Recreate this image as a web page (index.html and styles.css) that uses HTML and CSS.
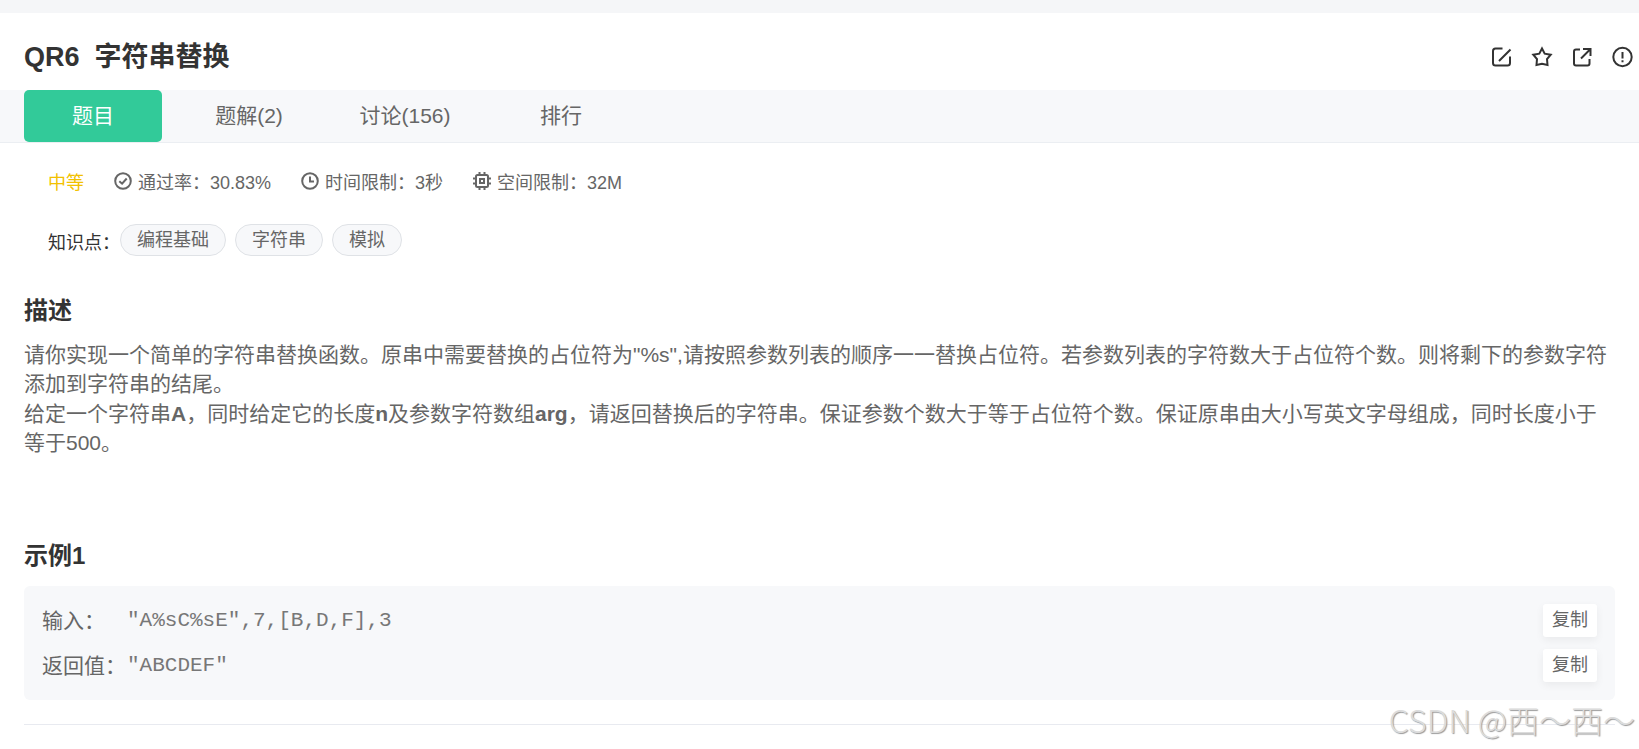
FILE: index.html
```html
<!DOCTYPE html>
<html lang="zh-CN">
<head>
    <meta charset="UTF-8">
    <meta name="viewport" content="width=device-width, initial-scale=1.0">
    <title>QR6 字符串替换</title>
    <link rel="stylesheet" href="styles.css">
</head>
<body>
    <main class="page">
        <header class="question-header">
            <h1><span>QR6</span><span>字符串替换</span></h1>
            <div class="actions">
                <button type="button" aria-label="编辑">
                    <svg viewBox="0 0 24 24"><path d="M12.500 3.500H5.500Q3 3.500 3 6V18Q3 20.500 5.500 20.500H17.500Q20 20.500 20 18V11.500M9 16L20.500 4.500"/></svg>
                </button>
                <button type="button" aria-label="收藏">
                    <svg viewBox="0 0 24 24"><path d="M12 3.500L14.700 8.700L20.700 9.700L17 14L17.500 20L12 18.700L6.500 20L7 14L3.300 9.700L9.300 8.700Z"/></svg>
                </button>
                <button type="button" aria-label="分享">
                    <svg viewBox="0 0 24 24"><path d="M10 4.500H6Q4 4.500 4 6.500V18.500Q4 20.500 6 20.500H17.500Q19.500 20.500 19.500 18.500V14M13 4H20.500V11M20.500 4L11 13.500"/></svg>
                </button>
                <button type="button" aria-label="反馈">
                    <svg viewBox="0 0 24 24"><circle cx="12.500" cy="12" r="9.200"/><path d="M12.500 7V13.500M12.500 15.200V17.200"/></svg>
                </button>
            </div>
        </header>
        <nav class="tabs">
            <a class="active" href="#question">题目</a>
            <a href="#solutions">题解(2)</a>
            <a href="#discuss">讨论(156)</a>
            <a href="#rank">排行</a>
        </nav>
        <div class="info">
            <div class="meta">
                <span class="level">中等</span>
                <span class="meta-item">
                    <svg viewBox="0 0 18 18"><circle cx="9" cy="9" r="7.800"/><path d="M5.300 9.200L8.100 11.700L12.700 6.500"/></svg>
                    通过率：30.83%
                </span>
                <span class="meta-item">
                    <svg viewBox="0 0 18 18"><circle cx="9" cy="9" r="7.800"/><path d="M9 4.500V9.500H13"/></svg>
                    时间限制：3秒
                </span>
                <span class="meta-item">
                    <svg viewBox="0 0 18 18"><rect x="3" y="3" width="12" height="12" rx="1.500"/><rect x="7" y="7" width="4" height="4"/><path d="M6.500 0V3M11.500 0V3M6.500 15V18M11.500 15V18M0 6.500H3M0 11.500H3M15 6.500H18M15 11.500H18"/></svg>
                    空间限制：32M
                </span>
            </div>
            <div class="knowledge">
                <span class="knowledge-label">知识点：</span>
                <div class="tags">
                    <a href="#basic">编程基础</a>
                    <a href="#string">字符串</a>
                    <a href="#simulate">模拟</a>
                </div>
            </div>
        </div>
        <section class="section description" id="question">
            <h2>描述</h2>
            <p>请你实现一个简单的字符串替换函数。原串中需要替换的占位符为"%s",请按照参数列表的顺序一一替换占位符。若参数列表的字符数大于占位符个数。则将剩下的参数字符添加到字符串的结尾。</p>
            <p>给定一个字符串<b>A</b>，同时给定它的长度<b>n</b>及参数字符数组<b>arg</b>，请返回替换后的字符串。保证参数个数大于等于占位符个数。保证原串由大小写英文字母组成，同时长度小于等于500。</p>
        </section>
        <section class="section example">
            <h2>示例1</h2>
            <div class="sample">
                <div class="sample-row">
                    <span class="sample-label">输入：</span>
                    <code>"A%sC%sE",7,[B,D,F],3</code>
                    <button type="button">复制</button>
                </div>
                <div class="sample-row">
                    <span class="sample-label">返回值：</span>
                    <code>"ABCDEF"</code>
                    <button type="button">复制</button>
                </div>
            </div>
        </section>
        <div class="watermark">CSDN @西～西～</div>
    </main>
</body>
</html>
```

FILE: styles.css
```css
* {
    box-sizing: border-box;
}
body {
    font-family: "Liberation Sans", "Noto Sans CJK SC", sans-serif;
    font-size: 18px;
    margin: 0;
    color: #666;
    background-color: #fff;
}
h1, h2, p {
    margin: 0;
}
a {
    color: inherit;
    text-decoration: none;
}
button {
    font-family: inherit;
    color: inherit;
    border: 0;
    cursor: pointer;
}
svg {
    display: block;
    fill: none;
    stroke: currentColor;
}
.page {
    position: relative;
    padding-bottom: 25px;
    border-top: 13px solid #f5f6f8;
}
.question-header {
    display: flex;
    align-items: center;
    justify-content: space-between;
    height: 77px;
    padding: 10px 5px 0 24px;
    color: #333;
}
.question-header h1 {
    display: flex;
    gap: 15px;
    font-size: 27px;
    line-height: 36px;
}
.actions {
    display: flex;
    gap: 16px;
}
.actions button {
    padding: 0;
    background: none;
}
.actions svg {
    width: 24px;
    height: 24px;
    stroke-width: 2;
}
.tabs {
    display: flex;
    gap: 18px;
    padding: 0 24px;
    background-color: #f7f8fa;
    border-bottom: 1px solid #ebeef2;
}
.tabs a {
    width: 138px;
    font-size: 21px;
    line-height: 52px;
    text-align: center;
    border-radius: 5px;
}
.tabs .active {
    color: #fff;
    background-color: #32ca99;
}
.info {
    padding: 24px 48px 0;
}
.meta {
    display: flex;
    flex-wrap: wrap;
    gap: 30px;
    line-height: 32px;
}
.level {
    color: #f2c100;
}
.meta-item {
    display: flex;
    align-items: center;
    gap: 6px;
}
.meta-item svg {
    width: 18px;
    height: 18px;
    margin-bottom: 4px;
    stroke-width: 2;
}
.knowledge {
    display: flex;
    margin-top: 25px;
}
.knowledge-label {
    color: #333;
    line-height: 39px;
}
.tags {
    display: flex;
    align-items: flex-start;
    gap: 9px;
}
.tags a {
    padding: 0 16px;
    line-height: 30px;
    background-color: #f7f8fa;
    border: 1px solid #dfe2e6;
    border-radius: 16px;
}
.section {
    margin: 0 24px;
}
.section h2 {
    color: #333;
    font-size: 24px;
    line-height: 36px;
}
.description {
    padding-top: 30px;
}
.description h2 {
    margin-bottom: 11px;
}
.description p {
    font-size: 21px;
    line-height: 29px;
    margin-bottom: 1px;
}
.example {
    padding: 80px 0 24px;
    border-bottom: 1px solid #e8eaf0;
}
.example h2 {
    margin-bottom: 12px;
}
.sample {
    display: flex;
    flex-direction: column;
    gap: 12px;
    padding: 18px;
    background-color: #f7f8fa;
    border-radius: 6px;
}
.sample-row {
    display: flex;
    align-items: center;
    font-size: 21px;
    line-height: 33px;
}
.sample-label {
    width: 85px;
}
.sample-row code {
    flex: 1;
    color: #777;
    font-family: "Liberation Mono", monospace;
    font-size: 21px;
}
.sample-row button {
    padding: 0 9px;
    font-size: 18px;
    line-height: 33px;
    background-color: #fff;
    border-radius: 3px;
    box-shadow: 0 3px 8px rgba(0, 0, 0, 0.06);
}
.watermark {
    position: absolute;
    right: 4px;
    bottom: 8px;
    font-family: "Noto Sans CJK SC", sans-serif;
    font-size: 32px;
    font-weight: 300;
    line-height: 46px;
    color: #dcdcdc;
    text-shadow: 1px 1px 1px #999;
}
```
